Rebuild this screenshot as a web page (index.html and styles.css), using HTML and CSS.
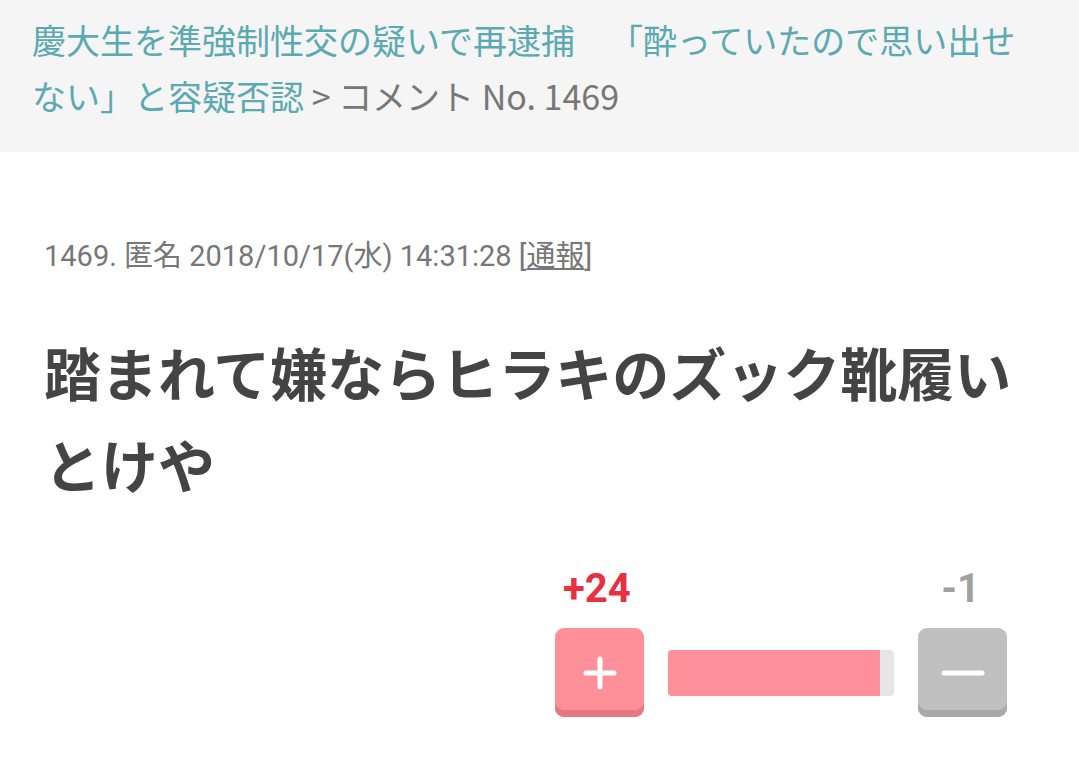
FILE: index.html
```html
<!DOCTYPE html>
<html lang="ja">
<head>
    <meta charset="UTF-8">
    <meta name="viewport" content="width=device-width, initial-scale=1.0">
    <title>コメント No. 1469</title>
    <link rel="stylesheet" href="styles.css">
</head>
<body>
    <div class="breadcrumb">
        <a href="#">慶大生を準強制性交の疑いで再逮捕　「酔っていたので思い出せない」と容疑否認</a> <span class="sep">&gt;</span> <span class="current">コメント No. 1469</span>
    </div>

    <div class="comment">
        <div class="meta">1469. 匿名 2018/10/17(水) 14:31:28 [<a href="#">通報</a>]</div>
        <div class="body">踏まれて嫌ならヒラキのズック靴履いとけや</div>

        <div class="vote">
            <div class="counts">
                <span class="plus-count">+24</span>
                <span class="minus-count">-1</span>
            </div>
            <div class="controls">
                <button type="button" class="vote-btn plus">
                    <svg width="34" height="34" viewBox="0 0 34 34"><path d="M17 3v28M3 17h28" stroke="#fff" stroke-width="5" stroke-linecap="round"/></svg>
                </button>
                <div class="bar"><div class="bar-fill" style="width: 94%"></div></div>
                <button type="button" class="vote-btn minus">
                    <svg width="44" height="34" viewBox="0 0 44 34"><path d="M3 17h38" stroke="#fff" stroke-width="5" stroke-linecap="round"/></svg>
                </button>
            </div>
        </div>
    </div>
</body>
</html>
```

FILE: styles.css
```css
body { margin: 0; background: #fff; font-family: Roboto, "Noto Sans CJK JP", sans-serif; color: #444; text-spacing-trim: space-all; }
a { color: inherit; }
.breadcrumb { background: #f5f5f5; padding: 12px 40px 0 32px; font-family: "Noto Sans CJK JP", sans-serif; font-size: 34px; line-height: 56px; color: #777; height: 140px; }
.breadcrumb a { color: #5aa9b3; text-decoration: none; }
.comment { padding: 84px 44px 40px 44px; }
.meta { font-size: 29px; line-height: 40px; color: #777; }
.meta a { color: #777; text-decoration: underline; }
.body { margin-top: 55px; font-size: 57px; font-weight: bold; line-height: 92px; color: #444; }
.vote { width: 452px; margin: 52px 28px 0 auto; }
.counts { display: flex; justify-content: space-between; align-items: center; font-size: 40px; font-weight: bold; line-height: 44px; padding: 0 27px 0 8px; }
.plus-count { color: #e8303f; }
.minus-count { color: #a0a0a0; }
.controls { display: flex; align-items: center; gap: 24px; margin-top: 17px; }
.vote-btn { width: 89px; height: 89px; border: none; border-radius: 9px; padding: 0; display: flex; align-items: center; justify-content: center; cursor: pointer; flex-shrink: 0; }
.vote-btn.plus { background: #ff8f99; box-shadow: inset 0 -7px 0 #e8787f; }
.vote-btn.minus { background: #c0c0c0; box-shadow: inset 0 -7px 0 #a9a9a9; }
.bar { flex: 1; height: 46px; background: #e6e6e6; border-radius: 4px; overflow: hidden; }
.bar-fill { height: 100%; background: #ff8f9a; }
```
